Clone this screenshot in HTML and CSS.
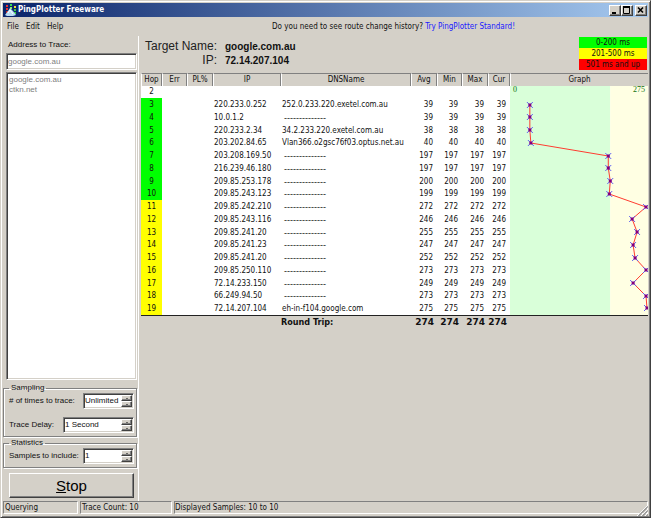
FILE: index.html
```html
<!DOCTYPE html>
<html lang="en">
<head>
<meta charset="utf-8">
<title>PingPlotter Freeware</title>
<link rel="stylesheet" href="styles.css">
</head>
<body>
<div class="window">
  <header class="titlebar">
    <svg class="app-icon" viewBox="0 0 12 12" aria-hidden="true">
      <rect x="1" y="1" width="2" height="2" fill="#e33"/><rect x="1" y="4" width="2" height="2" fill="#e33"/><rect x="1" y="7" width="2" height="2" fill="#b22"/>
      <rect x="5" y="0" width="2" height="2" fill="#3d5"/><rect x="5" y="3" width="2" height="2" fill="#8e6"/>
      <rect x="9" y="2" width="2" height="2" fill="#ed3"/><rect x="9" y="5" width="2" height="2" fill="#3c4"/><rect x="9" y="8" width="2" height="2" fill="#3c4"/>
      <path d="M0 11L3 7L5 4L8 7L11 11L8 12H2Z" fill="#b9dcf4"/><path d="M3 9L5 6L8 10" fill="none" stroke="#fff"/>
    </svg>
    <h1>PingPlotter Freeware</h1>
    <div class="caption-buttons">
      <button class="bevel" aria-label="Minimize"><svg viewBox="0 0 10 9"><path d="M2 7H6" stroke="#000" stroke-width="2"/></svg></button>
      <button class="bevel" aria-label="Maximize"><svg viewBox="0 0 10 9"><path d="M1.500 1V7.500H7.500V1" fill="none" stroke="#000"/><path d="M1 1H8" stroke="#000" stroke-width="2"/></svg></button>
      <button class="bevel close" aria-label="Close"><svg viewBox="0 0 10 9"><path d="M2 1.500L7 6.500M7 1.500L2 6.500" stroke="#000" stroke-width="1.600"/></svg></button>
    </div>
  </header>

  <div class="menubar">
    <nav><button>File</button><button>Edit</button><button>Help</button></nav>
    <p>Do you need to see route change history? <a href="#standard">Try PingPlotter Standard!</a></p>
  </div>

  <div class="content">
    <aside class="sidebar">
      <label class="address-label" for="address">Address to Trace:</label>
      <input class="sunken address" id="address" type="text" value="google.com.au">
      <select class="sunken history" size="10" aria-label="Recent addresses">
        <option>google.com.au</option>
        <option>ctkn.net</option>
      </select>
      <fieldset>
        <legend>Sampling</legend>
        <div class="field">
          <label for="times"># of times to trace:</label>
          <span class="sunken spin short"><input id="times" type="text" value="Unlimited"><span class="arrows"><button class="bevel up" aria-label="More traces"></button><button class="bevel down" aria-label="Fewer traces"></button></span></span>
        </div>
        <div class="field second">
          <label for="delay">Trace Delay:</label>
          <span class="sunken spin long"><input id="delay" type="text" value="1 Second"><span class="arrows"><button class="bevel up" aria-label="Longer delay"></button><button class="bevel down" aria-label="Shorter delay"></button></span></span>
        </div>
      </fieldset>
      <fieldset>
        <legend>Statistics</legend>
        <div class="field">
          <label for="samples">Samples to include:</label>
          <span class="sunken spin short"><input id="samples" type="text" value="1"><span class="arrows"><button class="bevel up" aria-label="More samples"></button><button class="bevel down" aria-label="Fewer samples"></button></span></span>
        </div>
      </fieldset>
      <button class="bevel stop"><span><u>S</u>top</span></button>
    </aside>

    <main>
      <div class="summary">
        <dl>
          <dt>Target Name:</dt><dd>google.com.au</dd>
          <dt>IP:</dt><dd>72.14.207.104</dd>
        </dl>
        <ul class="legend">
          <li class="good">0-200 ms</li>
          <li class="warn">201-500 ms</li>
          <li class="bad">501 ms and up</li>
        </ul>
      </div>
      <table>
        <colgroup><col class="c-hop"><col class="c-err"><col class="c-pl"><col class="c-ip"><col class="c-dns"><col class="c-avg"><col class="c-min"><col class="c-max"><col class="c-cur"><col></colgroup>
        <thead>
          <tr><th>Hop</th><th>Err</th><th>PL%</th><th>IP</th><th>DNSName</th><th>Avg</th><th>Min</th><th>Max</th><th>Cur</th><th>Graph</th></tr>
        </thead>
        <tbody>
          <tr><td>2</td><td></td><td></td><td></td><td></td><td></td><td></td><td></td><td></td>
            <td class="graph" rowspan="18">
              <div class="plot">
                <svg viewBox="0 0 139 229" preserveAspectRatio="none" role="img" aria-label="Latency by hop">
                  <defs><g id="pt"><path d="M-3 -3L3 3M3 -3L-3 3" stroke="#6060f0"/><rect x="-1.500" y="-1.500" width="3" height="3" fill="#800080"/></g></defs>
                  <rect width="101" height="229" fill="#d9ffd9"/><rect x="101" width="38" height="229" fill="#ffffe3"/>
                  <polyline fill="none" stroke="#ff3b30" points="20,19 20,31 20,44 21,57 99,70 99,82 101,95 100,108 137,121 123,133 128,146 124,159 126,172 137,184 124,197 137,210 138,222"/>
                  <use href="#pt" x="20" y="19"/><use href="#pt" x="20" y="31"/><use href="#pt" x="20" y="44"/><use href="#pt" x="21" y="57"/><use href="#pt" x="99" y="70"/><use href="#pt" x="99" y="82"/><use href="#pt" x="101" y="95"/><use href="#pt" x="100" y="108"/><use href="#pt" x="137" y="121"/><use href="#pt" x="123" y="133"/><use href="#pt" x="128" y="146"/><use href="#pt" x="124" y="159"/><use href="#pt" x="126" y="172"/><use href="#pt" x="137" y="184"/><use href="#pt" x="124" y="197"/><use href="#pt" x="137" y="210"/><use href="#pt" x="138" y="222"/>
                </svg>
                <div class="scale"><span>0</span><span>275</span></div>
              </div>
            </td></tr>
          <tr class="good"><td>3</td><td></td><td></td><td>220.233.0.252</td><td>252.0.233.220.exetel.com.au</td><td>39</td><td>39</td><td>39</td><td>39</td></tr>
          <tr class="good"><td>4</td><td></td><td></td><td>10.0.1.2</td><td class="none">--------------</td><td>39</td><td>39</td><td>39</td><td>39</td></tr>
          <tr class="good"><td>5</td><td></td><td></td><td>220.233.2.34</td><td>34.2.233.220.exetel.com.au</td><td>38</td><td>38</td><td>38</td><td>38</td></tr>
          <tr class="good"><td>6</td><td></td><td></td><td>203.202.84.65</td><td>Vlan366.o2gsc76f03.optus.net.au</td><td>40</td><td>40</td><td>40</td><td>40</td></tr>
          <tr class="good"><td>7</td><td></td><td></td><td>203.208.169.50</td><td class="none">--------------</td><td>197</td><td>197</td><td>197</td><td>197</td></tr>
          <tr class="good"><td>8</td><td></td><td></td><td>216.239.46.180</td><td class="none">--------------</td><td>197</td><td>197</td><td>197</td><td>197</td></tr>
          <tr class="good"><td>9</td><td></td><td></td><td>209.85.253.178</td><td class="none">--------------</td><td>200</td><td>200</td><td>200</td><td>200</td></tr>
          <tr class="good"><td>10</td><td></td><td></td><td>209.85.243.123</td><td class="none">--------------</td><td>199</td><td>199</td><td>199</td><td>199</td></tr>
          <tr class="warn"><td>11</td><td></td><td></td><td>209.85.242.210</td><td class="none">--------------</td><td>272</td><td>272</td><td>272</td><td>272</td></tr>
          <tr class="warn"><td>12</td><td></td><td></td><td>209.85.243.116</td><td class="none">--------------</td><td>246</td><td>246</td><td>246</td><td>246</td></tr>
          <tr class="warn"><td>13</td><td></td><td></td><td>209.85.241.20</td><td class="none">--------------</td><td>255</td><td>255</td><td>255</td><td>255</td></tr>
          <tr class="warn"><td>14</td><td></td><td></td><td>209.85.241.23</td><td class="none">--------------</td><td>247</td><td>247</td><td>247</td><td>247</td></tr>
          <tr class="warn"><td>15</td><td></td><td></td><td>209.85.241.20</td><td class="none">--------------</td><td>252</td><td>252</td><td>252</td><td>252</td></tr>
          <tr class="warn"><td>16</td><td></td><td></td><td>209.85.250.110</td><td class="none">--------------</td><td>273</td><td>273</td><td>273</td><td>273</td></tr>
          <tr class="warn"><td>17</td><td></td><td></td><td>72.14.233.150</td><td class="none">--------------</td><td>249</td><td>249</td><td>249</td><td>249</td></tr>
          <tr class="warn"><td>18</td><td></td><td></td><td>66.249.94.50</td><td class="none">--------------</td><td>273</td><td>273</td><td>273</td><td>273</td></tr>
          <tr class="warn"><td>19</td><td></td><td></td><td>72.14.207.104</td><td>eh-in-f104.google.com</td><td>275</td><td>275</td><td>275</td><td>275</td></tr>
        </tbody>
        <tfoot>
          <tr><td colspan="4"></td><td class="trip">Round Trip:</td><td>274</td><td>274</td><td>274</td><td>274</td><td></td></tr>
        </tfoot>
      </table>
    </main>
  </div>

  <footer class="statusbar">
    <span class="state">Querying</span>
    <span class="count">Trace Count: 10</span>
    <span class="shown">Displayed Samples: 10 to 10</span>
    <svg class="grip" viewBox="0 0 11 11" aria-hidden="true"><path d="M0 11L11 0M4 11L11 4M8 11L11 8" stroke="#fff"/><path d="M1.500 11L11 1.500M5.500 11L11 5.500M9.500 11L11 9.500" stroke="#909090" stroke-width="1.200"/></svg>
  </footer>
</div>
</body>
</html>
```
FILE: styles.css
```css
* { box-sizing: border-box; }

body {
  margin: 0;
  background: #d4d0c8;
  color: #111;
  font: 8px/12px "DejaVu Sans Condensed", "DejaVu Sans", sans-serif;
}

button, input, select { font: inherit; color: inherit; margin: 0; padding: 0; border: 0; border-radius: 0; }
h1, p, dl, dd, ul { margin: 0; padding: 0; }

.window {
  display: flex;
  flex-direction: column;
  min-height: 100vh;
  padding: 2px 1px 1px 2px;
  border: 1px solid;
  border-color: #d4d0c8 #404040 #404040 #d4d0c8;
  box-shadow: inset 1px 1px #fff, inset -1px -1px #808080;
}

.bevel {
  background: #d4d0c8;
  border: 1px solid;
  border-color: #fff #404040 #404040 #fff;
  box-shadow: inset -1px -1px #808080;
}

.sunken {
  background: #fff;
  border: 1px solid;
  border-color: #808080 #fff #fff #808080;
  box-shadow: inset 1px 1px #404040, inset -1px -1px #d4d0c8;
}

/* Title bar */
.titlebar {
  display: flex;
  align-items: center;
  height: 14px;
  margin-right: 1px;
  padding: 0 1px 0 2px;
  background: linear-gradient(to right, #0a246a, #a6caf0);
  color: #fff;
}
.app-icon { width: 12px; height: 12px; }
.titlebar h1 { margin-left: 1px; font: bold 8px/14px "DejaVu Sans Condensed", sans-serif; }
.caption-buttons { display: flex; margin-left: auto; }
.caption-buttons button { display: flex; width: 12px; height: 11px; }
.caption-buttons svg { width: 10px; height: 9px; }
.caption-buttons .close { margin-left: 2px; }

/* Menu bar */
.menubar { display: grid; grid-template-columns: 135px 1fr; align-items: center; height: 19px; }
.menubar nav { display: flex; gap: 7px; padding-left: 4px; }
.menubar nav button { background: none; }
.menubar p { padding-left: 134px; }
.menubar a { color: #1a1aff; text-decoration: none; }

.content { flex: 1; display: grid; grid-template-columns: 136px 1fr; }

/* Sidebar */
.sidebar {
  display: flex;
  flex-direction: column;
  padding-bottom: 3px;
  border-right: 1px solid #fff;
  font: 8px/10px "Liberation Sans", sans-serif;
}
.address-label { height: 17px; padding: 4px 0 0 5px; }
.address { height: 17px; margin: 0 1px 2px 3px; padding-left: 1px; color: #808080; }
.history { flex: 1; margin: 0 1px 3px 3px; padding: 2px 1px; color: #808080; overflow: hidden; outline: 0; }
.history option { padding: 0 1px; min-height: 10px; line-height: 10px; }

fieldset {
  min-width: 0;
  margin: 0 1px 1px 0;
  padding: 0 2px 3px 5px;
  border: 1px solid #808080;
  box-shadow: 1px 1px #fff, inset 1px 1px #fff;
}
legend { margin-left: 0; padding: 0 2px; line-height: 10px; }
.field { display: flex; align-items: center; justify-content: space-between; height: 16px; }
.field.second { margin-top: 8px; }
.spin { display: flex; height: 16px; padding: 1px; }
.spin input { flex: 1; min-width: 0; width: 0; background: none; outline: 0; }
.spin.short { width: 51px; }
.spin.long { width: 71px; }
.arrows { display: flex; flex-direction: column; width: 11px; }
.arrows button { flex: 1; display: grid; place-items: center; }
.arrows button::before { content: ""; border: 1px solid transparent; }
.arrows .up::before { border-bottom-color: #000; border-top: 0; }
.arrows .down::before { border-top-color: #000; border-bottom: 0; }
.stop { height: 25px; margin: 4px 4px 0 6px; font: 15px/20px "Liberation Sans", sans-serif; color: #000; }

/* Summary */
main { padding: 0 1px 0 2px; min-width: 0; }
.summary { display: flex; justify-content: space-between; height: 37px; }
.summary dl { display: grid; grid-template-columns: 76px auto; column-gap: 8px; align-content: start; padding-top: 4px; line-height: 13px; }
.summary dt { text-align: right; font: 12px/13px "Liberation Sans", sans-serif; color: #222; }
.summary dd { font: bold 10px/14px "Liberation Sans", sans-serif; }
.legend { list-style: none; width: 68px; margin: 1px 1px 0 0; text-align: center; line-height: 11px; }
.legend li { height: 11px; }
.legend .good, .good td:first-child { background: #00ff00; }
.legend .warn, .warn td:first-child { background: #ffff00; }
.legend .bad { background: #ff0000; }

/* Trace table */
table { width: 100%; table-layout: fixed; border-collapse: separate; border-spacing: 0; line-height: 12px; }
.c-hop { width: 21px; }
.c-err { width: 25px; }
.c-pl { width: 26px; }
.c-ip { width: 68px; }
.c-dns { width: 130px; }
.c-avg { width: 26px; }
.c-min { width: 25px; }
.c-max { width: 26px; }
.c-cur { width: 22px; }
th {
  height: 13px;
  padding: 0;
  border-top: 1px solid #808080;
  border-right: 1px solid #808080;
  border-left: 1px solid #fff;
  font-weight: normal;
  text-align: center;
}
th:last-child { border-right: 0; }
td { padding: 0; white-space: nowrap; }
tbody { background: #fff; }
tbody tr { height: 13px; }
tbody tr:nth-child(4n+1) { height: 12px; }
tbody td:first-child { text-align: center; }
tbody td:nth-child(4), tbody td:nth-child(5) { padding-left: 1px; }
tbody td.none { padding-left: 3px; font: 9px/12px "Liberation Sans", sans-serif; }
tbody td:nth-child(n+6) { text-align: right; padding-right: 4px; }
tbody td.graph { padding: 0; height: 229px; vertical-align: top; }
.plot { position: relative; }
.plot > svg { display: block; width: 100%; height: 229px; }
.scale {
  position: absolute;
  inset: 0 0 auto;
  display: flex;
  justify-content: space-between;
  padding: 0 3px;
  color: #107010;
  font: 8px/8px "Liberation Serif", serif;
}
tfoot td { height: 14px; border-top: 1px solid #222; text-align: right; font: bold 9px/13px "DejaVu Sans", sans-serif; }
tfoot td:nth-child(n+3) { padding-right: 3px; }
tfoot .trip { text-align: left; font: bold 9px/13px "DejaVu Sans Condensed", sans-serif; }

/* Status bar */
.statusbar { display: flex; gap: 2px; height: 15px; margin-right: 1px; }
.statusbar span { height: 13px; padding-left: 1px; border: 1px solid; border-color: #808080 #fff #fff #808080; }
.state { width: 75px; }
.count { width: 92px; }
.statusbar .shown { flex: 1; margin-right: -13px; padding-left: 0; }
.grip { align-self: flex-end; width: 11px; height: 11px; }
```
